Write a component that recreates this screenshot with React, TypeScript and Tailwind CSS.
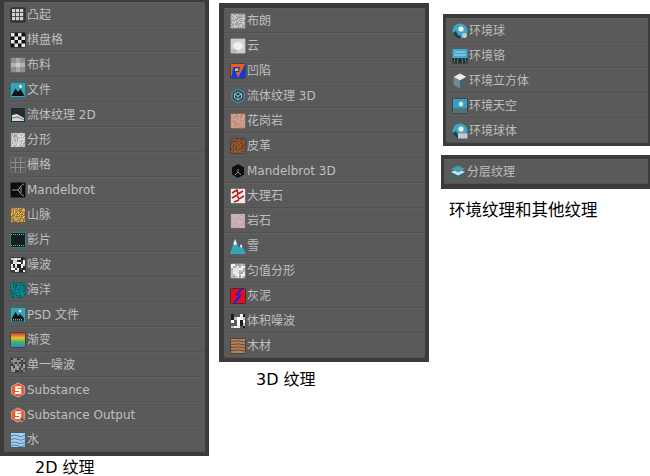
import React from "react";

const UI_FONT = "font-['DejaVu_Sans','Noto_Sans_CJK_SC',sans-serif]";

// deterministic speckle for the texture thumbnails
function Noise({ colors, size = 2, seed = 7 }: { colors: string[]; size?: number; seed?: number }) {
  const cells: React.ReactNode[] = [];
  let s = seed;
  for (let y = 0; y < 14; y += size) {
    for (let x = 0; x < 14; x += size) {
      s = (Math.imul(s, 1103515245) + 12345) & 0x7fffffff;
      const w = Math.min(size, 14 - x);
      const h = Math.min(size, 14 - y);
      cells.push(<rect key={`${x}-${y}`} x={x + 1} y={y + 1} width={w} height={h} fill={colors[(s >> 16) % colors.length]} />);
    }
  }
  return <>{cells}</>;
}

function Frame({ stroke = "#3c3c3c", children }: { stroke?: string; children: React.ReactNode }) {
  return (
    <svg width="16" height="16" viewBox="0 0 16 16" className="shrink-0 blur-[0.35px]">
      {children}
      <rect x="0.5" y="0.5" width="15" height="15" rx="1" fill="none" stroke={stroke} />
    </svg>
  );
}

function Shape({ children }: { children: React.ReactNode }) {
  return (
    <svg width="16" height="16" viewBox="0 0 16 16" className="shrink-0 blur-[0.35px]">
      {children}
    </svg>
  );
}

function Globe({ badge }: { badge: React.ReactNode }) {
  return (
    <Shape>
      <circle cx="8" cy="8" r="7.5" fill="#3aa6cc" />
      <path d="M0.8 10 L4 8 L6 12 L9 13 L9 15.4 A7.5 7.5 0 0 1 0.8 10 Z" fill="#24404c" />
      <circle cx="9" cy="6" r="2.6" fill="#f8f6dc" />
      {badge}
    </Shape>
  );
}

function Substance({ cursor }: { cursor?: boolean }) {
  return (
    <Shape>
      <path d="M8 0.8 L14.4 4.4 V11.6 L8 15.2 L1.6 11.6 V4.4 Z" fill="#ee5a2c" stroke="#f4f4f4" strokeWidth="0.5" />
      <path d="M11.2 5.2 H6.2 V8 H10.2 V10.9 H4.9" fill="none" stroke="#fff" strokeWidth="2" />
      {cursor && <path d="M10 10 L15.5 12.5 L12.8 13.2 L12 15.8 Z" fill="#444" stroke="#bbb" strokeWidth="0.5" />}
    </Shape>
  );
}

const icons: Record<string, React.ReactNode> = {
  bump: (
    <Frame>
      <rect x="1" y="1" width="14" height="14" fill="#333" />
      {[2, 6, 10].flatMap((y) =>
        [2, 6, 10].map((x) => <rect key={`${x}${y}`} x={x} y={y} width="3.2" height="3.2" fill="#d0d0d0" />)
      )}
    </Frame>
  ),
  checker: (
    <Frame>
      <rect x="1" y="1" width="14" height="14" fill="#111" />
      {[0, 1, 2, 3].flatMap((r) =>
        [0, 1, 2, 3].map((c) =>
          (r + c) % 2 === 0 ? <rect key={`${r}${c}`} x={1 + c * 3.5} y={1 + r * 3.5} width="3.5" height="3.5" fill="#e8e8e8" /> : null
        )
      )}
    </Frame>
  ),
  cloth: (
    <Frame stroke="#666">
      <rect x="1" y="1" width="14" height="14" fill="#8e8e8e" />
      <rect x="1" y="6" width="14" height="4" fill="#b4b4b4" />
      <rect x="6" y="1" width="4" height="14" fill="#a8a8a8" />
      <rect x="6" y="6" width="4" height="4" fill="#cccccc" />
    </Frame>
  ),
  file: (
    <Frame stroke="#2f6f78">
      <rect x="1" y="1" width="14" height="14" fill="#35a4b4" />
      <path d="M1.5 14 L5.5 6.5 L8 10 L10.5 7 L14.5 14 Z" fill="#111" />
      <circle cx="10.5" cy="4.5" r="1.4" fill="#f4f4f4" />
    </Frame>
  ),
  fluid2d: (
    <Frame stroke="#2f6f78">
      <rect x="1" y="1" width="14" height="14" fill="#2b2b2b" />
      <path d="M2 8 L7 7 L14 11 V14 H2 Z" fill="#d8d8d8" />
      <path d="M2 11 L8 10 L14 13" stroke="#777" fill="none" />
    </Frame>
  ),
  fractal: <Frame stroke="#666"><Noise colors={["#bdbdbd", "#d0d0d0", "#a4a4a4", "#dedede"]} size={1} /></Frame>,
  grid: (
    <Frame stroke="#707070">
      <rect x="1" y="1" width="14" height="14" fill="#5c5c5c" />
      <path d="M5.5 1 V15 M10.5 1 V15 M1 5.5 H15 M1 10.5 H15" stroke="#8c8c8c" />
    </Frame>
  ),
  mandelbrot: (
    <Frame stroke="#333">
      <rect x="1" y="1" width="14" height="14" fill="#0c0c0c" />
      <path d="M2 8 H8 M8 8 L11 4 Q13 2 14 2 M8 8 L11 12 Q13 14 14 14 M11 5 V11" stroke="#9a9a9a" fill="none" />
    </Frame>
  ),
  mountain: <Frame stroke="#6a5a3a"><Noise colors={["#c49a4e", "#a87f3a", "#dcb86c", "#8c6a30"]} size={1} seed={11} /></Frame>,
  movie: (
    <Frame stroke="#2f7f88">
      <rect x="1" y="1" width="14" height="14" fill="#1c1c1c" />
      <path d="M1 2.5 H15 M1 13.5 H15" stroke="#58b8c2" strokeDasharray="1 1" />
    </Frame>
  ),
  noise: <Frame><Noise colors={["#ededed", "#1c1c1c", "#d0d0d0", "#3a3a3a", "#ffffff"]} size={2} seed={3} /></Frame>,
  ocean: <Frame stroke="#2a5a60"><Noise colors={["#0b6e7c", "#0a7f8c", "#0a5562", "#0e8f98"]} size={1} seed={5} /></Frame>,
  psd: (
    <Frame stroke="#2f6f78">
      <rect x="1" y="1" width="14" height="14" fill="#38a4b4" />
      <path d="M2 11 L5.5 5 L8 9 L10 7 L14 11 Z" fill="#111" />
      <circle cx="10" cy="4" r="1.3" fill="#f0f0f0" />
      <rect x="2" y="11" width="12" height="3.5" fill="#222" />
      <path d="M3 12.8 H13" stroke="#ddd" strokeDasharray="1 1" />
    </Frame>
  ),
  gradient: (
    <Frame stroke="#444">
      <defs>
        <linearGradient id="grad-map" x1="0" y1="0" x2="0" y2="1">
          <stop offset="0" stopColor="#d8342c" />
          <stop offset="0.35" stopColor="#e8c030" />
          <stop offset="0.65" stopColor="#42b45a" />
          <stop offset="1" stopColor="#2c8cd8" />
        </linearGradient>
      </defs>
      <rect x="1" y="1" width="14" height="14" fill="url(#grad-map)" />
    </Frame>
  ),
  cellular: <Frame stroke="#4a4a4a"><Noise colors={["#383838", "#8a8a8a", "#5c5c5c", "#a0a0a0"]} size={2} seed={19} /></Frame>,
  substance: <Substance />,
  substanceOut: <Substance cursor />,
  water: (
    <Frame stroke="#4a5a68">
      <rect x="1" y="1" width="14" height="14" fill="#a8cdec" />
      <path d="M1 4 Q5 2 8 4 T15 3 M1 7.5 Q5 5.5 8 7.5 T15 6.5 M1 11 Q5 9 8 11 T15 10 M1 14 Q5 12 8 14 T15 13" stroke="#4e82b4" fill="none" />
    </Frame>
  ),
  brown: <Frame stroke="#777"><Noise colors={["#a8a8a8", "#bcbcbc", "#949494", "#cccccc"]} size={1} seed={23} /></Frame>,
  cloud: (
    <Frame stroke="#888">
      <rect x="1" y="1" width="14" height="14" fill="#cfcfcf" />
      <ellipse cx="8" cy="8" rx="5" ry="4" fill="#f0f0f0" />
      <ellipse cx="4" cy="13" rx="3" ry="2" fill="#b8b8b8" />
    </Frame>
  ),
  dent: (
    <Frame stroke="#444">
      <rect x="1" y="1" width="14" height="14" fill="#0a3ce0" />
      <path d="M1 1 H15 L8 15 L6 9 H9 L10 4 H3 L2 12 L1 14 Z" fill="#e86018" />
      <path d="M5 5.5 H8.5 L8 8 H5 Z" fill="#f0d020" />
    </Frame>
  ),
  fluid3d: (
    <Shape>
      <path d="M8 1 L14 4.5 V11.5 L8 15 L2 11.5 V4.5 Z" fill="#2a4a50" stroke="#3fa0ac" />
      <path d="M8 4 L11.5 6 V10 L8 12 L4.5 10 V6 Z M8 8 V12 M8 8 L4.5 6 M8 8 L11.5 6" fill="none" stroke="#9fdce2" strokeWidth="0.8" />
    </Shape>
  ),
  granite: <Frame stroke="#7a6a60"><Noise colors={["#cfa088", "#c49680", "#d6aa94", "#bc907a"]} size={1} seed={29} /></Frame>,
  leather: <Frame stroke="#4e4238"><Noise colors={["#8c5430", "#7a4828", "#9c6038", "#6c4024"]} size={1} seed={31} /></Frame>,
  mandel3d: (
    <Shape>
      <path d="M8 1 L14 4.5 V11.5 L8 15 L2 11.5 V4.5 Z" fill="#0e0e0e" />
      <path d="M8 6 V9 L5 12 M8 9 L11 12" stroke="#888" fill="none" />
    </Shape>
  ),
  marble: (
    <Frame stroke="#777">
      <rect x="1" y="1" width="14" height="14" fill="#f0ecec" />
      <path d="M2 5 L7 2 L8 6 L13 3 M2 10 L7 7 L9 11 L14 8 M4 14 L9 12" stroke="#c01818" strokeWidth="1.5" fill="none" />
    </Frame>
  ),
  rock: <Frame stroke="#6a5e5e"><Noise colors={["#c6aeae", "#bea6a6", "#ceb6b6"]} size={1} seed={37} /></Frame>,
  snow: (
    <Shape>
      <path d="M0 16 L5 1 L9 10 L11 6 L16 16 Z" fill="#35a4b4" />
      <path d="M3.4 6 L5 1 L7 6 L5 7.5 Z M10 8 L11 6 L12.4 9 L11 9.8 Z" fill="#f2f2f2" />
    </Shape>
  ),
  regular: <Frame stroke="#777"><Noise colors={["#e6e6e6", "#bcbcbc", "#f4f4f4", "#a8a8a8"]} size={2} seed={41} /></Frame>,
  stucco: (
    <Frame stroke="#333">
      <rect x="1" y="1" width="14" height="14" fill="#f00818" />
      <path d="M3 15 L8 8 L5 7 L10 1 H13 L9 6 L12 7 L6 15 Z" fill="#2424d8" />
    </Frame>
  ),
  volume: <Frame stroke="#555"><Noise colors={["#f0f0f0", "#1e1e1e", "#c0c0c0", "#ffffff", "#5a5a5a"]} size={3} seed={43} /></Frame>,
  wood: (
    <Frame stroke="#4e4238">
      <rect x="1" y="1" width="14" height="14" fill="#b0835c" />
      <path d="M1 3.5 Q8 2 15 4 M1 6.5 Q8 5 15 7 M1 9.5 Q8 8 15 10 M1 12.5 Q8 11 15 13" stroke="#6c4a30" fill="none" />
    </Frame>
  ),
  envBall: <Globe badge={<circle cx="12.5" cy="12.5" r="2.5" fill="#c8c8c8" />} />,
  envChrome: (
    <Shape>
      <rect x="0.5" y="1" width="15" height="9" fill="#46a8cc" />
      <path d="M3 4 H13 M2 7 H14" stroke="#a8dcec" />
      <rect x="0.5" y="10" width="15" height="5.5" fill="#1e2c30" />
      <path d="M3 10 L2 15 M6 10 L5.5 15 M10 10 L10.5 15 M13 10 L14 15" stroke="#5a7a84" />
    </Shape>
  ),
  envCube: (
    <Shape>
      <path d="M8 0.5 L14.5 4 L8 7.5 L1.5 4 Z" fill="#ececec" />
      <path d="M1.5 4 L8 7.5 V15.5 L1.5 12 Z" fill="#6e8a96" />
      <path d="M14.5 4 L8 7.5 V15.5 L14.5 12 Z" fill="#46606c" />
    </Shape>
  ),
  envSky: (
    <Frame stroke="#444">
      <rect x="1" y="1" width="14" height="9" fill="#34a0c8" />
      <rect x="1" y="10" width="14" height="5" fill="#4e7484" />
      <circle cx="9" cy="6" r="2.2" fill="#f4f2d8" />
    </Frame>
  ),
  envSphere: <Globe badge={<rect x="6" y="10.5" width="9.5" height="5" fill="#c8c8c8" />} />,
  layered: (
    <Shape>
      <path d="M8 8 L15 11 L8 14.5 L1 11 Z" fill="#2a6e78" />
      <path d="M8 5 L15 8 L8 11.5 L1 8 Z" fill="#c8e4e8" />
      <path d="M8 1.5 L15 5 L8 8.5 L1 5 Z" fill="#3fa0ac" />
    </Shape>
  ),
};

type Item = [string, string];

const textures2d: Item[] = [
  ["bump", "凸起"], ["checker", "棋盘格"], ["cloth", "布料"], ["file", "文件"], ["fluid2d", "流体纹理 2D"],
  ["fractal", "分形"], ["grid", "栅格"], ["mandelbrot", "Mandelbrot"], ["mountain", "山脉"], ["movie", "影片"],
  ["noise", "噪波"], ["ocean", "海洋"], ["psd", "PSD 文件"], ["gradient", "渐变"], ["cellular", "单一噪波"],
  ["substance", "Substance"], ["substanceOut", "Substance Output"], ["water", "水"],
];

const textures3d: Item[] = [
  ["brown", "布朗"], ["cloud", "云"], ["dent", "凹陷"], ["fluid3d", "流体纹理 3D"], ["granite", "花岗岩"],
  ["leather", "皮革"], ["mandel3d", "Mandelbrot 3D"], ["marble", "大理石"], ["rock", "岩石"], ["snow", "雪"],
  ["regular", "匀值分形"], ["stucco", "灰泥"], ["volume", "体积噪波"], ["wood", "木材"],
];

const envTextures: Item[] = [
  ["envBall", "环境球"], ["envChrome", "环境铬"], ["envCube", "环境立方体"], ["envSky", "环境天空"], ["envSphere", "环境球体"],
];

function Row({ icon, label }: { icon: string; label: string }) {
  return (
    <div className="flex h-[25px] items-center gap-[1px] pl-[6px] text-[12px] text-[#bebebe] shadow-[inset_0_-1px_0_#525252,inset_0_1px_0_#5f5f5f]">
      {icons[icon]}
      <span className="whitespace-nowrap">{label}</span>
    </div>
  );
}

function Panel({ items, className }: { items: Item[]; className: string }) {
  return (
    <div className={`bg-[#3b3b3b] ${className}`}>
      <div className="rounded-[3px] bg-[#5a5a5a]">
        {items.map(([icon, label]) => (
          <Row key={label} icon={icon} label={label} />
        ))}
      </div>
    </div>
  );
}

export default function App() {
  return (
    <div className={`flex h-[476px] w-[650px] overflow-hidden bg-white ${UI_FONT}`}>
      <div className="w-[209px] shrink-0">
        <Panel items={textures2d} className="pb-[4px] pl-[4px] pr-[4px] pt-[2px]" />
        <p className="pl-[35px] pt-[1px] text-[16px] leading-[22px] text-black">2D 纹理</p>
      </div>

      <div className="ml-[10px] w-[210px] shrink-0 pt-[3px]">
        <Panel items={textures3d} className="pb-[4px] pl-[5px] pr-[4px] pt-[5px]" />
        <p className="pl-[37px] pt-[7px] text-[16px] leading-[22px] text-black">3D 纹理</p>
      </div>

      <div className="ml-[14px] flex-1 pt-[14px]">
        <Panel items={envTextures} className="pb-[3px] pl-[3px] pr-[2px] pt-[4px]" />
        <Panel items={[["layered", "分层纹理"]]} className="-ml-[2px] mt-[9px] pb-[5px] pl-[3px] pr-[2px] pt-[4px]" />
        <p className="pl-[6px] pt-[11px] text-[16.5px] leading-[22px] text-black">环境纹理和其他纹理</p>
      </div>
    </div>
  );
}
